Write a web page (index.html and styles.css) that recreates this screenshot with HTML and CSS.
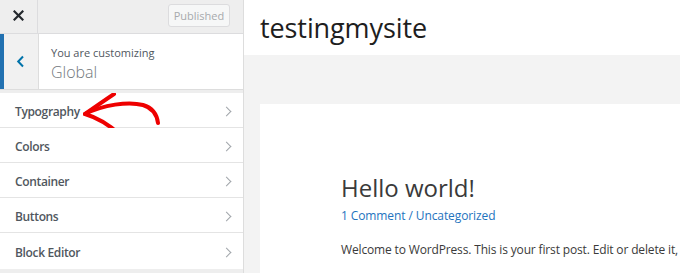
FILE: index.html
```html
<!DOCTYPE html>
<html>
<head>
<meta charset="utf-8">
<link rel="stylesheet" href="styles.css">
</head>
<body>
<div class="app">
  <aside class="sidebar">
    <div class="topbar">
      <div class="close">
        <svg width="11" height="11" viewBox="0 0 11 11"><path d="M1.5 1.5L9.5 9.5M9.5 1.5L1.5 9.5" stroke="#23282d" stroke-width="2.2" stroke-linecap="square"/></svg>
      </div>
      <div class="topbar-right">
        <button class="published">Published</button>
      </div>
    </div>
    <div class="info">
      <div class="back">
        <svg width="9" height="13" viewBox="0 0 9 13"><path d="M7 1.5L2.2 6.5L7 11.5" stroke="#0073aa" stroke-width="2" fill="none"/></svg>
      </div>
      <div class="info-text">
        <div class="customizing">You are customizing</div>
        <div class="section-title">Global</div>
      </div>
    </div>
    <ul class="menu">
      <li class="menu-item typography">Typography<span class="chev"></span>
        <svg class="arrow" width="90" height="50" viewBox="0 0 90 50"><path d="M2 21 C 20 12, 45 8, 60 12 C 70 15, 74 22, 75 30" stroke="#ee0000" stroke-width="4" fill="none" stroke-linecap="round"/><path d="M31 1 C 22 7, 12 14, 2 21 C 12 24, 24 30, 36 41" stroke="#ee0000" stroke-width="4" fill="none" stroke-linecap="round" stroke-linejoin="round"/></svg>
      </li>
      <li class="menu-item">Colors<span class="chev"></span></li>
      <li class="menu-item">Container<span class="chev"></span></li>
      <li class="menu-item">Buttons<span class="chev"></span></li>
      <li class="menu-item">Block Editor<span class="chev"></span></li>
    </ul>
  </aside>
  <main class="preview">
    <header class="site-header">
      <div class="site-title">testingmysite</div>
    </header>
    <div class="content">
      <article class="post">
        <h1 class="post-title">Hello world!</h1>
        <div class="post-meta"><a>1 Comment</a> / <a>Uncategorized</a></div>
        <p class="post-body">Welcome to WordPress. This is your first post. Edit or delete it, then start writing!</p>
      </article>
    </div>
  </main>
</div>
</body>
</html>
```

FILE: styles.css
```css
* { box-sizing: border-box; }
html, body { margin: 0; padding: 0; }
body {
  width: 680px;
  height: 273px;
  overflow: hidden;
  font-family: "Open Sans", "Noto Sans", sans-serif;
  background: #f3f3f3;
}
.app {
  display: flex;
  height: 273px;
  overflow: hidden;
}
.sidebar {
  width: 244px;
  flex: none;
  background: #eeeeee;
  border-right: 1px solid #dddddd;
  display: flex;
  flex-direction: column;
}
.topbar {
  height: 34px;
  display: flex;
  border-bottom: 1px solid #dcdcde;
  background: #eeeeee;
}
.close {
  width: 38px;
  border-right: 1px solid #dcdcde;
  display: flex;
  align-items: center;
  justify-content: center;
  padding-bottom: 3px;
}
.topbar-right {
  flex: 1;
  display: flex;
  justify-content: flex-end;
  align-items: flex-start;
  padding: 4px 13px 0 0;
}
.published {
  font-family: "Open Sans", sans-serif;
  font-size: 11px;
  color: #a7aaad;
  background: #f6f7f7;
  border: 1px solid #dcdcde;
  border-radius: 3px;
  height: 23px;
  width: 62px;
  padding: 0;
}
.info {
  height: 56px;
  display: flex;
  border-bottom: 1px solid #dddddd;
  background: #ffffff;
}
.back {
  width: 39px;
  background: #f1f1f1;
  border-left: 4px solid #2271b1;
  border-right: 1px solid #dddddd;
  display: flex;
  align-items: center;
  justify-content: center;
  padding-right: 2px;
}
.info-text {
  padding: 11px 0 0 12px;
}
.customizing {
  font-size: 11px;
  color: #50575e;
  line-height: 16px;
}
.section-title {
  font-size: 16px;
  color: #72777c;
  font-weight: 300;
  line-height: 22px;
  margin-top: 0;
}
.menu {
  list-style: none;
  margin: 3px 0 0 0;
  padding: 0;
  background: #ffffff;
}
.menu-item {
  position: relative;
  height: 35px;
  border-bottom: 1px solid #e4e4e4;
  display: flex;
  align-items: center;
  justify-content: space-between;
  padding: 2px 13px 0 15px;
  font-size: 12px;
  font-weight: 600;
  letter-spacing: -0.35px;
  color: #50575e;
  background: #ffffff;
}
.menu-item:last-child { border-bottom: none; height: 36px; }
.chev {
  width: 7px;
  height: 7px;
  border-top: 1.5px solid #a0a5aa;
  border-right: 1.5px solid #a0a5aa;
  transform: rotate(45deg);
}
.arrow {
  position: absolute;
  left: 83px;
  top: 0;
}
.preview {
  flex: 1;
  display: flex;
  flex-direction: column;
  min-width: 0;
}
.site-header {
  height: 55px;
  background: #ffffff;
  padding: 0 0 0 16px;
  flex: none;
}
.site-title {
  font-size: 27px;
  color: #1e1e1e;
  line-height: 55px;
  letter-spacing: -0.1px;
}
.content {
  flex: 1;
  display: flex;
  flex-direction: column;
  padding: 49px 0 0 16px;
  min-height: 0;
}
.post {
  flex: 1;
  background: #ffffff;
  padding: 68px 0 0 81px;
  white-space: nowrap;
  overflow: hidden;
}
.post-title {
  margin: 0;
  font-size: 24px;
  font-weight: 400;
  color: #3a3a3a;
  line-height: 32px;
}
.post-meta {
  font-size: 12px;
  color: #1e73be;
  margin-top: 3px;
  line-height: 18px;
  letter-spacing: -0.1px;
}
.post-body {
  margin: 16px 0 0 0;
  font-size: 12px;
  color: #3a3a3a;
  line-height: 18px;
  letter-spacing: -0.15px;
}
```
